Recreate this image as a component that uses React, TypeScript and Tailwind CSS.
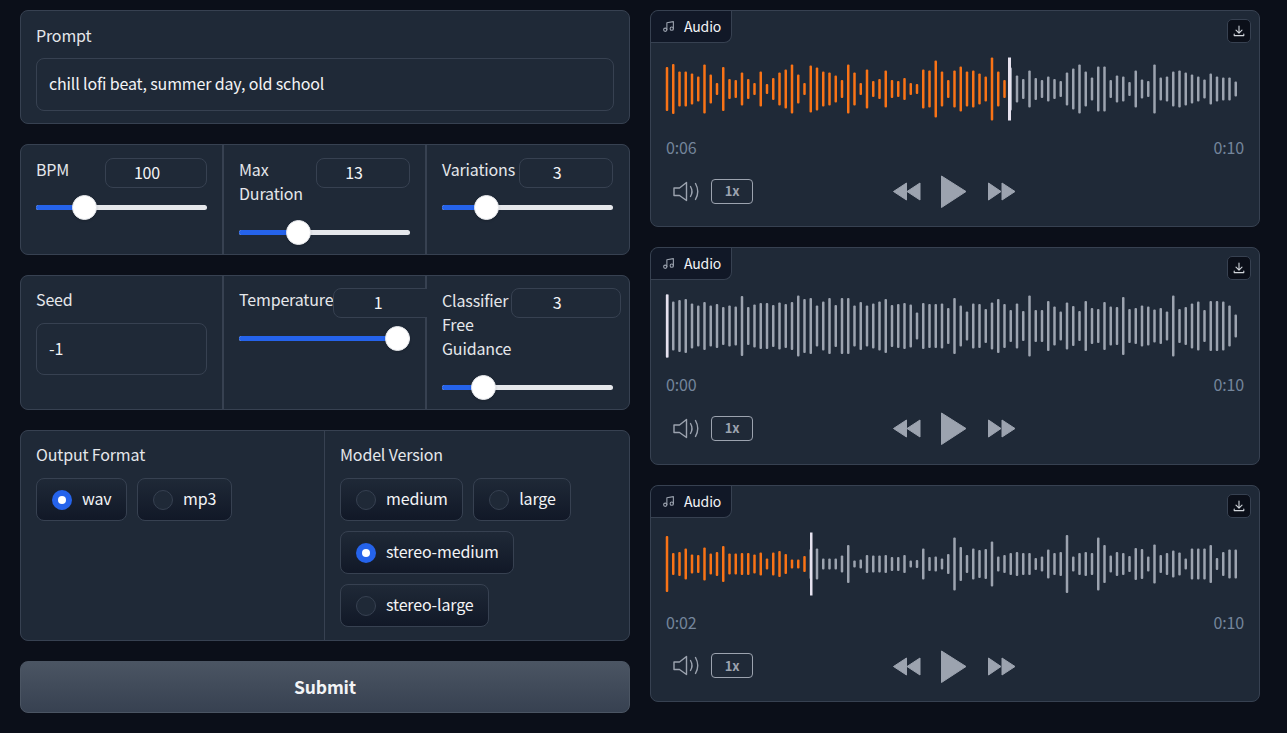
import React from "react";

const wave1 = [44,50,35,35,31,25,49,29,12,44,20,18,33,20,12,35,10,22,33,39,49,29,12,47,43,35,33,27,18,49,33,12,39,16,20,37,18,16,22,12,10,39,37,57,35,18,37,45,35,37,31,25,63,35,18,43,27,20,37,22,18,25,20,16,33,41,49,35,23,45,45,18,27,25,14,37,19,16,49,23,25,35,37,33,29,25,19,31,25,23,23,15];
const wave2 = [63,49,52,54,45,41,48,41,44,38,41,39,60,38,43,46,46,42,47,44,48,61,54,56,41,49,56,42,56,56,41,48,41,45,49,54,42,44,46,43,27,46,44,44,45,36,56,41,29,45,44,34,47,54,44,32,45,30,61,32,32,50,39,29,47,40,30,50,36,34,48,39,38,58,34,36,41,39,33,36,29,61,34,38,45,49,32,50,50,49,41,23];
const wave3 = [56,22,24,31,19,18,33,21,24,36,21,21,22,22,19,23,11,23,26,20,9,9,16,30,31,11,11,11,17,38,7,9,18,17,17,18,14,14,18,7,8,31,14,15,11,20,53,34,18,31,28,30,45,15,18,22,24,22,22,12,15,29,22,24,58,15,22,24,22,53,38,17,24,22,16,32,30,15,39,18,22,27,23,11,31,31,31,38,12,24,29,29];

function Wave({ bars, played, head, headW }: { bars: number[]; played: number; head: number; headW: number }) {
  return (
    <svg width="578" height="64" viewBox="0 0 578 64" className="block overflow-visible">
      {bars.map((h, i) => (
        <rect key={i} x={-0.25 + 6.25 * i} y={32 - h / 2} width="2.5" height={h} rx="1" fill={i < played ? "#f97316" : "#9ca3af"} />
      ))}
      <rect x={head} y="0.5" width={headW} height="63" fill="#e6e2ef" />
    </svg>
  );
}

function AudioCard({ bars, played, head, headW, time }: { bars: number[]; played: number; head: number; headW: number; time: string }) {
  return (
    <div className="relative h-[217.4px] rounded-lg border border-[#374151] bg-[#1f2937] px-[15px] pt-[46px]">
      <div className="absolute left-0 top-0 flex h-[32px] w-[81px] items-center rounded-br-lg rounded-tl-lg border-b border-r border-[#374151] bg-[#111827] pb-[1px] pl-[11px] text-[14px] leading-5 text-[#f3f4f6]">
        <svg width="13" height="13" viewBox="0 0 24 24" fill="none" stroke="#9ca3af" strokeWidth="2" strokeLinecap="round" strokeLinejoin="round" className="mr-[9px] mt-[1px]">
          <path d="M9 18V5l12-2v13" />
          <circle cx="6" cy="18" r="3" />
          <circle cx="18" cy="16" r="3" />
        </svg>
        Audio
      </div>
      <div className="absolute right-[8px] top-[8px] flex h-[24px] w-[24px] items-center justify-center rounded-[5px] border border-[#374151] bg-[#0b0f19]">
        <svg width="12" height="12" viewBox="0 0 12 12" fill="none" stroke="#d1d5db" strokeWidth="1.1" strokeLinecap="round" strokeLinejoin="round">
          <path d="M6 1v7M3 5.2 6 8.2l3-3M1.2 9v1.6h9.6V9" />
        </svg>
      </div>
      <Wave bars={bars} played={played} head={head} headW={headW} />
      <div className="mt-[16px] flex h-[20px] items-center justify-between text-[16px] leading-5 text-[#74859b]">
        <span>{time}</span>
        <span>0:10</span>
      </div>
      <div className="mt-[16px] grid h-[34px] grid-cols-[1fr_auto_1fr] items-center">
        <div className="flex items-center pl-[7px]">
          <svg width="27" height="21" viewBox="0 0 27 21" fill="none" stroke="#9ca3af" strokeWidth="1.4" strokeLinecap="round" strokeLinejoin="round">
            <path d="M1 7h5.5L13.5 1.5v18L6.5 14.5H1z" />
            <path d="M17.5 5.5q3 5 0 10" />
            <path d="M22.5 2.5q4.5 8 0 16" />
          </svg>
          <div className="ml-[11px] flex h-[25px] w-[42px] items-center justify-center rounded-[4px] border border-[#9ca3af] text-[13px] font-semibold leading-4 text-[#9ca3af]">1x</div>
        </div>
        <svg width="123" height="34" viewBox="0 0 123 34" fill="#9ca3af" stroke="#9ca3af" strokeWidth="1" strokeLinejoin="round" className="-ml-[2px] mt-[2px]">
          <path d="M0.5 16.5 13.5 8v17zM14 16.5 27 8v17z" />
          <path d="M48.5 1 73 16.5 48.5 32.5z" />
          <path d="M95.5 8 108 16.5 95.5 25zM109 8 122 16.5 109 25z" />
        </svg>
        <div />
      </div>
    </div>
  );
}

function Slider({ pct, thumb }: { pct: number; thumb: number }) {
  return (
    <div className="relative flex h-[25px] w-full items-center">
      <div className="h-[5px] w-full rounded-full bg-[#e5e7eb]" />
      <div className="absolute left-0 h-[5px] rounded-l-full bg-[#2563eb]" style={{ width: pct }} />
      <div className="absolute h-[25px] w-[25px] rounded-full border border-[#e5e7eb] bg-white shadow-sm" style={{ left: thumb - 12.5 }} />
    </div>
  );
}

function NumberBox({ value, w }: { value: string; w: string }) {
  return (
    <div className={`flex h-[30px] shrink-0 items-center justify-center rounded-lg border border-[#374151] bg-[#1f2937] pb-[2px] pr-[18px] text-[16px] leading-6 text-[#f3f4f6] ${w}`}>
      {value}
    </div>
  );
}

function Radio({ label, on }: { label: string; on?: boolean }) {
  return (
    <div className="flex h-[43px] items-center rounded-lg border border-[#374151] bg-gradient-to-b from-[#1f2937] to-[#111827] pl-[15px] pr-[14.5px] text-[16px] leading-6 text-[#f3f4f6]">
      {on ? (
        <div className="mr-[10px] flex h-[20px] w-[20px] items-center justify-center rounded-full bg-[#2563eb]">
          <div className="h-[8px] w-[8px] rounded-full bg-white" />
        </div>
      ) : (
        <div className="mr-[10px] h-[20px] w-[20px] rounded-full border border-[#374151] bg-[#1f2937]" />
      )}
      <span className="pb-[4px]">{label}</span>
    </div>
  );
}

const labelCls = "text-[16px] leading-6 text-[#e5e7eb]";

export default function App() {
  return (
    <div className="flex min-h-[733px] items-start gap-5 bg-[#0b0f19] pl-5 pt-[10px] tracking-[-0.15px] [font-family:'Noto_Sans_CJK_SC','Liberation_Sans',sans-serif]">
      <div className="flex w-[610px] flex-col gap-5">
        <div className="h-[114px] rounded-lg border border-[#374151] bg-[#1f2937] px-[15px] pt-[12px]">
          <div className={labelCls}>Prompt</div>
          <div className="mt-[11px] flex h-[53px] items-center rounded-lg border border-[#374151] px-[12px] pb-[3px] text-[16px] leading-6 text-[#f3f4f6]">
            chill lofi beat, summer day, old school
          </div>
        </div>

        <div className="grid h-[111px] grid-cols-[201px_201px_minmax(0,1fr)] gap-[2px] overflow-hidden rounded-lg border border-[#374151] bg-[#374151]">
          <div className="bg-[#1f2937] px-[15px] pt-[13px]">
            <div className="flex items-start justify-between">
              <div className={`${labelCls} -mt-px`}>BPM</div>
              <NumberBox value="100" w="w-[102px]" />
            </div>
            <div className="mt-[7px]"><Slider pct={40} thumb={48.5} /></div>
          </div>
          <div className="bg-[#1f2937] px-[15px] pt-[13px]">
            <div className="flex items-start justify-between">
              <div className={`${labelCls} -mt-px w-[60px]`}>Max Duration</div>
              <NumberBox value="13" w="w-[94px]" />
            </div>
            <div className="mt-[15px]"><Slider pct={50} thumb={59.5} /></div>
          </div>
          <div className="bg-[#1f2937] pl-[15px] pr-[16px] pt-[13px]">
            <div className="flex items-start justify-between">
              <div className={`${labelCls} -mt-px`}>Variations</div>
              <NumberBox value="3" w="w-[94px]" />
            </div>
            <div className="mt-[7px]"><Slider pct={36} thumb={44} /></div>
          </div>
        </div>

        <div className="grid h-[135px] grid-cols-[201px_201px_minmax(0,1fr)] gap-[2px] overflow-hidden rounded-lg border border-[#374151] bg-[#374151]">
          <div className="bg-[#1f2937] px-[15px] pt-[11px]">
            <div className={labelCls}>Seed</div>
            <div className="mt-[12px] flex h-[52px] items-center rounded-lg border border-[#374151] px-[12px] pb-[2px] text-[16px] leading-6 text-[#f3f4f6]">-1</div>
          </div>
          <div className="bg-[#1f2937] px-[15px] pt-[12px]">
            <div className="flex items-start">
              <div className={`${labelCls} -mt-px w-[94px] shrink-0`}>Temperature</div>
              <NumberBox value="1" w="w-[108px]" />
            </div>
            <div className="mt-[8px]"><Slider pct={150} thumb={158.5} /></div>
          </div>
          <div className="relative bg-[#1f2937] pl-[15px] pr-[16px] pt-[12px]">
            <div className="flex items-start">
              <div className={`${labelCls} w-[69px] shrink-0`}>Classifier Free Guidance</div>
              <NumberBox value="3" w="w-[110px]" />
            </div>
            <div className="mt-[15px]"><Slider pct={35} thumb={41} /></div>
          </div>
        </div>

        <div className="grid h-[211px] grid-cols-[303px_minmax(0,1fr)] gap-px overflow-hidden rounded-lg border border-[#374151] bg-[#374151]">
          <div className="bg-[#1f2937] px-[15px] pt-[11px]">
            <div className={labelCls}>Output Format</div>
            <div className="mt-[12px] flex flex-wrap gap-[10px]">
              <Radio label="wav" on />
              <Radio label="mp3" />
            </div>
          </div>
          <div className="bg-[#1f2937] px-[15px] pt-[11px]">
            <div className={labelCls}>Model Version</div>
            <div className="mt-[12px] flex flex-wrap gap-[10px]">
              <Radio label="medium" />
              <Radio label="large" />
              <Radio label="stereo-medium" on />
              <Radio label="stereo-large" />
            </div>
          </div>
        </div>

        <div className="flex h-[52px] items-center justify-center rounded-lg border border-[#4b5563] bg-gradient-to-b from-[#4b5563] to-[#374151] text-[17.5px] font-bold leading-7 text-[#f3f4f6]">
          Submit
        </div>
      </div>

      <div className="flex w-[610px] flex-col gap-5">
        <AudioCard bars={wave1} played={55} head={342} headW={3} time="0:06" />
        <AudioCard bars={wave2} played={0} head={0} headW={2.5} time="0:00" />
        <AudioCard bars={wave3} played={23} head={144} headW={2.5} time="0:02" />
      </div>
    </div>
  );
}
